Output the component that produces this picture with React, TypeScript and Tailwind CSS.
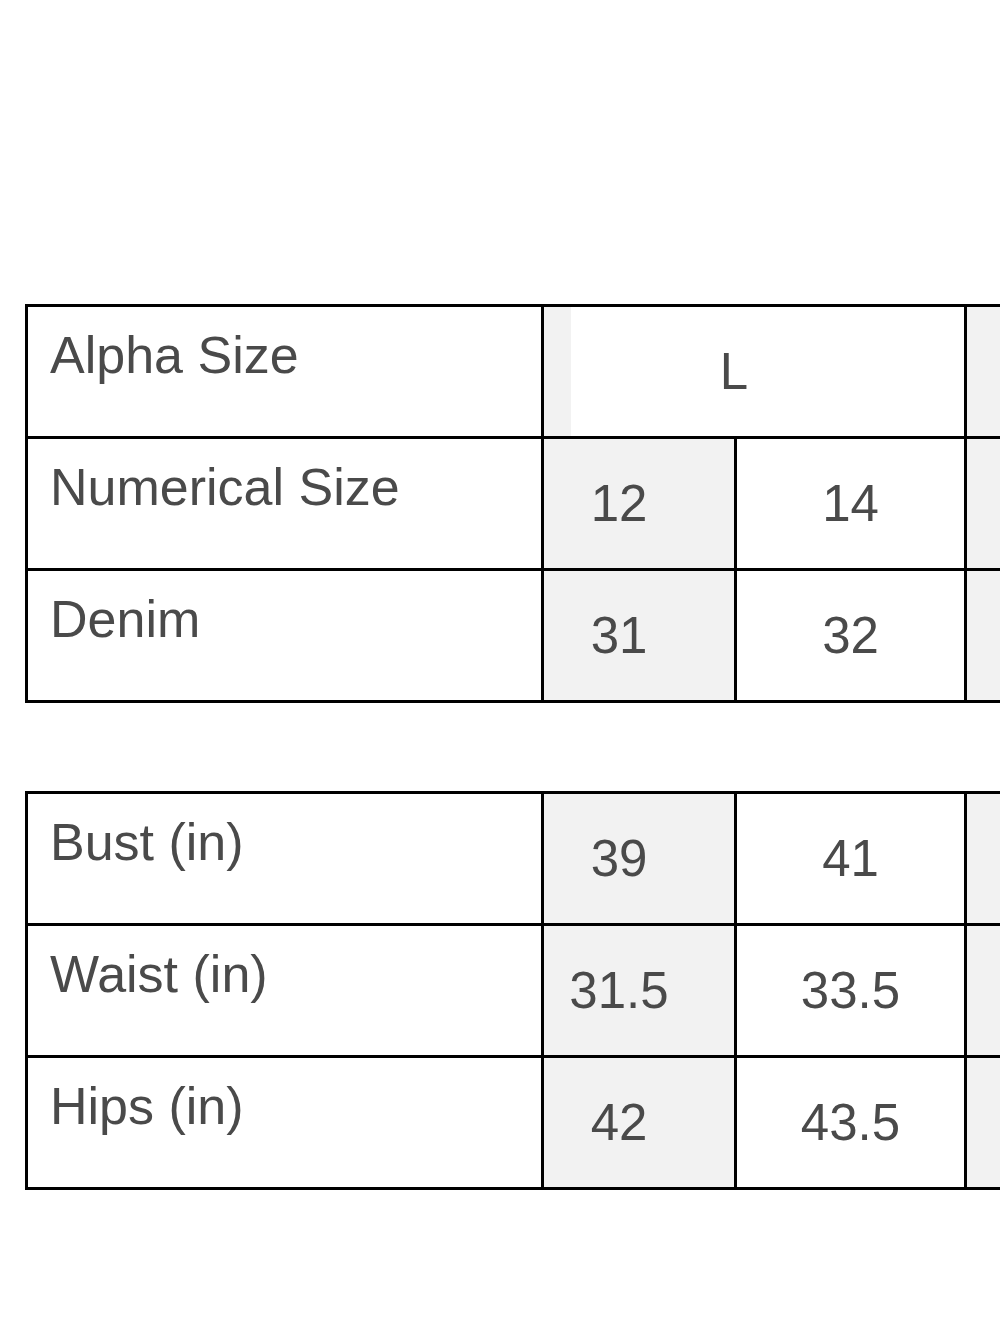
import React from "react";

const font = { fontFamily: '"Liberation Sans", Arial, sans-serif' };

function Label({ children }: { children: React.ReactNode }) {
  return (
    <div className="w-[516px] shrink-0 border-r-[3px] border-b-[3px] border-black bg-white pl-[22px] pt-[19px] text-[52px] leading-[58px] text-[#4a4a4a]">
      {children}
    </div>
  );
}

function Row({ label, a, b }: { label: string; a: string; b: string }) {
  return (
    <div className="flex h-[132px]">
      <Label>{label}</Label>
      <div className="flex w-[193px] shrink-0 items-center justify-center border-r-[3px] border-b-[3px] border-black bg-[#f2f2f2] pr-[40px] text-[51px] leading-none text-[#4a4a4a]">
        {a}
      </div>
      <div className="flex w-[230px] shrink-0 items-center justify-center border-r-[3px] border-b-[3px] border-black bg-white text-[51px] leading-none text-[#4a4a4a]">
        {b}
      </div>
      <div className="w-[200px] shrink-0 border-b-[3px] border-black bg-[#f2f2f2]" />
    </div>
  );
}

export default function App() {
  return (
    <div className="h-[1333px] w-[1000px] overflow-hidden bg-white pt-[304px]" style={font}>
      <div className="ml-[25px] w-[1200px] border-l-[3px] border-t-[3px] border-black">
        <div className="flex h-[132px]">
          <Label>Alpha Size</Label>
          <div className="flex w-[423px] shrink-0 border-r-[3px] border-b-[3px] border-black bg-white">
            <div className="w-[27px] shrink-0 bg-[#f2f2f2]" />
            <div className="flex flex-1 items-center justify-center pr-[67px] text-[51px] leading-none text-[#4a4a4a]">
              L
            </div>
          </div>
          <div className="w-[200px] shrink-0 border-b-[3px] border-black bg-[#f2f2f2]" />
        </div>
        <Row label="Numerical Size" a="12" b="14" />
        <Row label="Denim" a="31" b="32" />
      </div>

      <div className="ml-[25px] mt-[88px] w-[1200px] border-l-[3px] border-t-[3px] border-black">
        <Row label="Bust (in)" a="39" b="41" />
        <Row label="Waist (in)" a="31.5" b="33.5" />
        <Row label="Hips (in)" a="42" b="43.5" />
      </div>
    </div>
  );
}
